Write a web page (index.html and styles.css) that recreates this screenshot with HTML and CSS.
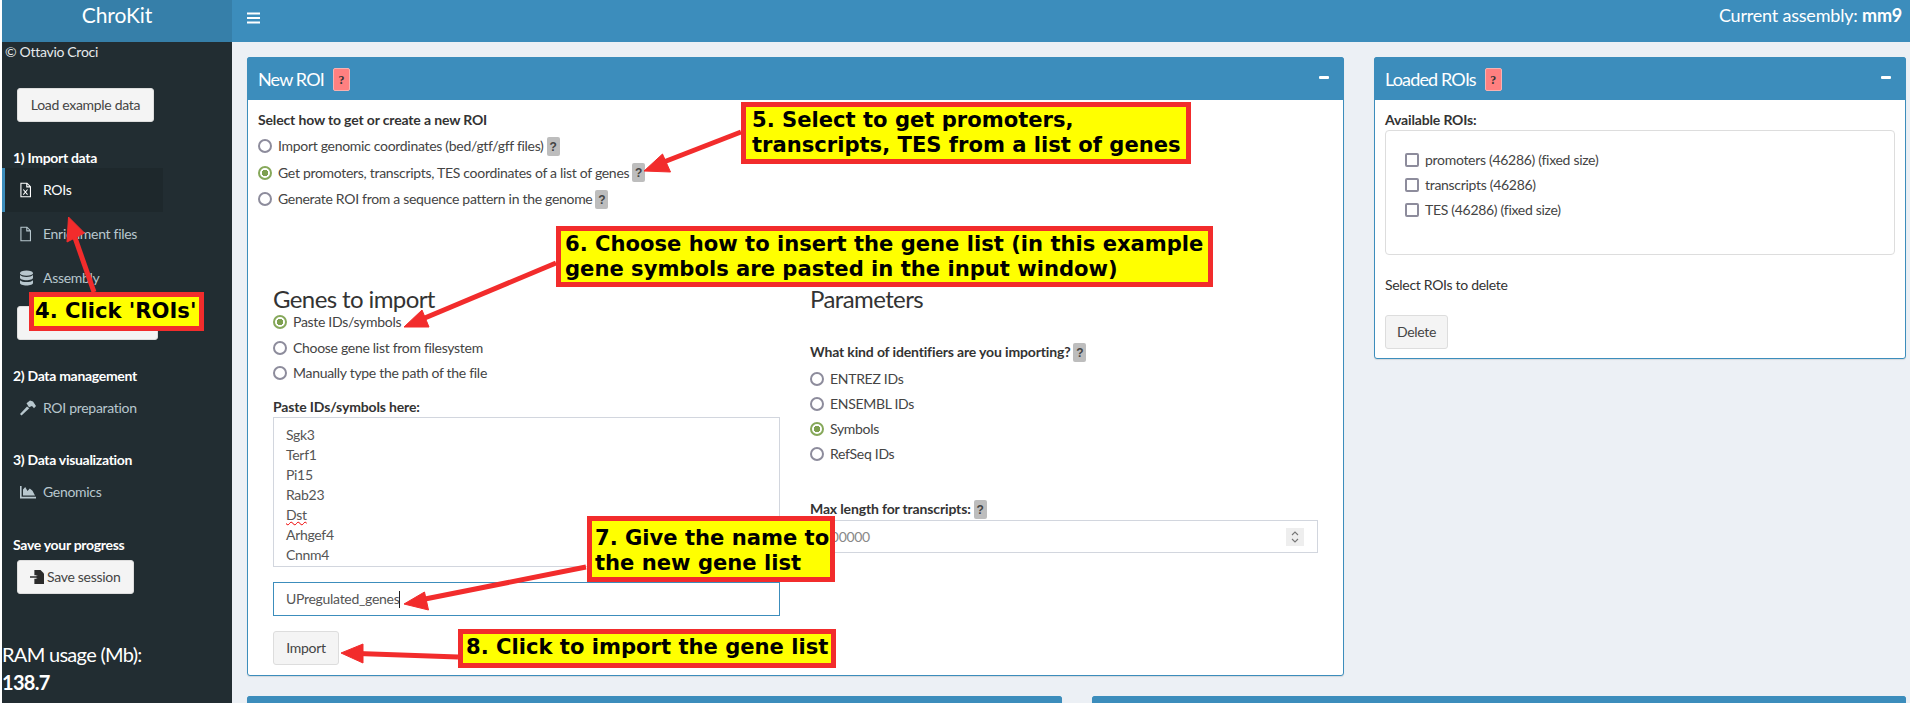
FILE: index.html
```html
<!DOCTYPE html>
<html lang="en">
<head>
<meta charset="utf-8">
<title>ChroKit</title>
<link rel="stylesheet" href="styles.css">
</head>
<body>
<div class="app">
  <aside class="sidebar">
    <div class="logo">ChroKit</div>
    <div class="copy">© Ottavio Croci</div>
    <button class="btn load">Load example data</button>
    <h4 class="side-h first">1) Import data</h4>
    <a class="item active"><svg class="ic" viewBox="0 0 12 16"><path d="M1 .6h6.600L11.400 4.400V15.400H1z M7.400 .8V4.600H11.200" fill="none" stroke="currentColor" stroke-width="1.200"/><path d="M3.600 7.500l4.600 5.500M8.200 7.500l-4.600 5.500" stroke="currentColor" stroke-width="1.100"/></svg>ROIs</a>
    <a class="item"><svg class="ic" viewBox="0 0 12 16"><path d="M1 .6h6.600L11.400 4.400V15.400H1z M7.400 .8V4.600H11.200" fill="none" stroke="currentColor" stroke-width="1.200"/></svg>Enrichment files</a>
    <a class="item"><svg class="ic db" viewBox="0 0 14 16"><ellipse cx="7" cy="2.800" rx="7" ry="2.800" fill="currentColor"/><path d="M0 4.800v3c0 1.500 3.100 2.700 7 2.700s7-1.200 7-2.700v-3c-1.200 1.300-3.900 2-7 2s-5.800-.7-7-2zM0 10.300v3c0 1.500 3.100 2.700 7 2.700s7-1.200 7-2.700v-3c-1.200 1.300-3.900 2-7 2s-5.800-.7-7-2z" fill="currentColor"/></svg>Assembly</a>
    <button class="btn hidden-btn">Load assembly</button>
    <h4 class="side-h second">2) Data management</h4>
    <a class="item"><svg class="ic wide" viewBox="0 0 16 16"><path d="M1.500 15.500L0 14l7-7.500 2.300 1.700z" fill="currentColor"/><path d="M6.500 3.200L10 .5l3 1L16 6l-2 2.200-2-2.200-3 1.200z" fill="currentColor"/></svg>ROI preparation</a>
    <h4 class="side-h third">3) Data visualization</h4>
    <a class="item"><svg class="ic wide" viewBox="0 0 16 14"><path d="M0 1h1.600v10.800H16V13.400H0z" fill="currentColor"/><path d="M3 10.600V4.500L5.200 2 7.500 6 9.800 3.500 12.500 5.800 15 10.600z" fill="currentColor"/></svg>Genomics</a>
    <h4 class="side-h fourth">Save your progress</h4>
    <button class="btn save"><svg class="ic-save" viewBox="0 0 16 16"><path d="M5 0h7l4 4v12H5z" fill="#2b2b2b"/><path d="M0 8h9" stroke="#f4f4f4" stroke-width="4"/><path d="M0 7.200h7.500V5l3.800 3-3.800 3V8.800H0z" fill="#2b2b2b"/></svg>Save session</button>
    <div class="ram">RAM usage (Mb):</div>
    <div class="ram strong">138.7</div>
  </aside>

  <div class="right">
    <header class="topbar">
      <svg class="burger" viewBox="0 0 14 12"><path d="M0 0h14v2.200H0zM0 4.900h14v2.200H0zM0 9.800h14V12H0z" fill="#fff"/></svg>
      <div class="assembly">Current assembly: <b>mm9</b></div>
    </header>

    <main class="content">
      <section class="box box-new">
        <div class="box-head"><span class="box-title">New ROI</span><span class="q q-red">?</span><span class="minus"></span></div>
        <div class="box-body">
          <div class="lab">Select how to get or create a new ROI</div>
          <div class="radios top-radios">
            <label class="opt"><input type="radio" name="how">Import genomic coordinates (bed/gtf/gff files)<span class="q q-gray">?</span></label>
            <label class="opt"><input type="radio" name="how" checked>Get promoters, transcripts, TES coordinates of a list of genes<span class="q q-gray">?</span></label>
            <label class="opt"><input type="radio" name="how">Generate ROI from a sequence pattern in the genome<span class="q q-gray">?</span></label>
          </div>
          <div class="cols">
            <div class="col">
              <h3>Genes to import</h3>
              <div class="radios left-radios">
                <label class="opt"><input type="radio" name="src" checked>Paste IDs/symbols</label>
                <label class="opt"><input type="radio" name="src">Choose gene list from filesystem</label>
                <label class="opt"><input type="radio" name="src">Manually type the path of the file</label>
              </div>
              <div class="lab paste-lab">Paste IDs/symbols here:</div>
              <div class="area">
                <div>Sgk3</div><div>Terf1</div><div>Pi15</div><div>Rab23</div><div><span class="typo">Dst</span></div><div>Arhgef4</div><div>Cnnm4</div>
              </div>
              <div class="field focus">UPregulated_genes<span class="caret"></span></div>
              <button class="btn import">Import</button>
            </div>
            <div class="col">
              <h3>Parameters</h3>
              <div class="lab kind-lab">What kind of identifiers are you importing?<span class="q q-gray">?</span></div>
              <div class="radios right-radios">
                <label class="opt"><input type="radio" name="id">ENTREZ IDs</label>
                <label class="opt"><input type="radio" name="id">ENSEMBL IDs</label>
                <label class="opt"><input type="radio" name="id" checked>Symbols</label>
                <label class="opt"><input type="radio" name="id">RefSeq IDs</label>
              </div>
              <div class="lab max-lab">Max length for transcripts:<span class="q q-gray">?</span></div>
              <div class="field number"><span class="num">100000</span>
                <span class="spin"><svg viewBox="0 0 10 18"><path d="M2 7l3-3 3 3M2 11l3 3 3-3" fill="none" stroke="#777" stroke-width="1.100"/></svg></span>
              </div>
            </div>
          </div>
        </div>
      </section>

      <section class="box box-loaded">
        <div class="box-head"><span class="box-title">Loaded ROIs</span><span class="q q-red">?</span><span class="minus"></span></div>
        <div class="box-body">
          <div class="lab">Available ROIs:</div>
          <div class="well">
            <label class="opt"><input type="checkbox">promoters (46286) (fixed size)</label>
            <label class="opt"><input type="checkbox">transcripts (46286)</label>
            <label class="opt"><input type="checkbox">TES (46286) (fixed size)</label>
          </div>
          <div class="note">Select ROIs to delete</div>
          <button class="btn delete">Delete</button>
        </div>
      </section>

      <section class="box box-low"><div class="box-head"></div></section>
      <section class="box box-low"><div class="box-head"></div></section>
    </main>
  </div>
</div>

<svg class="arrows" viewBox="0 0 1910 703">
  <g fill="#f22c2c" stroke="#f22c2c">
    <path class="shaft" d="M94 292L73 232"/><path d="M68.500 217L67 242 84.500 233z"/>
    <path class="shaft" d="M741 132L656 165"/><path d="M644 171L662.500 154 670.500 172z"/>
    <path class="shaft" d="M556 263L420 320"/><path d="M404 327L422 310 429 327z"/>
    <path class="shaft" d="M586 567L420 600"/><path d="M404 604L424.500 592 428.500 610z"/>
    <path class="shaft" d="M458 657L358 653.500"/><path d="M341 653L363 644 363 663z"/>
  </g>
</svg>
<div class="note-box n4">4. Click 'ROIs'</div>
<div class="note-box n5">5. Select to get promoters,<br>transcripts, TES from a list of genes</div>
<div class="note-box n6">6. Choose how to insert the gene list (in this example<br>gene symbols are pasted in the input window)</div>
<div class="note-box n7">7. Give the name to<br>the new gene list</div>
<div class="note-box n8">8. Click to import the gene list</div>
</body>
</html>
```
FILE: styles.css
```css
* { box-sizing: border-box; }
html, body { margin: 0; height: 703px; overflow: hidden; background: #fff; }
body { font-family: "Lato", "Open Sans", sans-serif; font-size: 14px; line-height: 20px; color: #333; letter-spacing: -0.3px; position: relative; }
.app { display: flex; height: 703px; padding-left: 2px; }
.sidebar { width: 230px; flex: none; background: #222d32; color: #fff; height: 703px; overflow: hidden; }
.logo { height: 42px; background: #367fa9; text-align: center; font-size: 21px; line-height: 30px; letter-spacing: -.1px; color: #fff; }
.copy { color: #e6eaec; padding-left: 3px; }
.btn { display: block; font: inherit; letter-spacing: inherit; height: 34px; padding: 0 12px; background: #f4f4f4; border: 1px solid #ddd; border-radius: 3px; color: #444; }
.load { margin: 26px 0 0 15px; width: 137px; }
.side-h { margin: 0 0 0 11px; font-size: 14px; font-weight: 700; line-height: 20px; color: #fff; height: 20px; }
.first { margin-top: 26px; }
.second { margin-top: 26px; }
.third { margin-top: 20px; }
.fourth { margin-top: 21px; }
.item { display: flex; align-items: center; height: 44px; padding-left: 15px; color: #b8c7ce; border-left: 3px solid transparent; width: 161px; white-space: nowrap; }
.item.active { background: #1e282c; border-left-color: #3c8dbc; color: #fff; }
.ic { width: 11px; height: 16px; margin-right: 12px; flex: none; }
.ic.db { width: 13px; margin-right: 10px; }
.ic.wide { width: 16px; margin-right: 7px; }
.hidden-btn { margin: 6px 0 0 15px; width: 141px; }
.save { margin: 5px 0 0 15px; width: 117px; padding: 0 0 0 12px; display: flex; align-items: center; }
.ic-save { width: 14px; height: 14px; margin-right: 3px; }
.ram { font-size: 20px; line-height: 28px; color: #fff; letter-spacing: -.7px; margin-top: -1px; }
.save + .ram { margin-top: 46px; }
.ram.strong { font-weight: 700; margin-top: 0; }

.right { flex: 1; min-width: 0; display: flex; flex-direction: column; background: #ecf0f5; }
.topbar { height: 42px; flex: none; background: #3c8dbc; color: #fff; display: flex; align-items: center; justify-content: space-between; padding: 0 8px 0 15px; }
.burger { width: 13px; height: 12px; margin-top: -6px; }
.assembly { font-size: 18px; margin-top: -13px; letter-spacing: -.2px; }

.content { display: grid; grid-template-columns: 815px 282px 30px 532px; grid-template-rows: 619px 1fr; row-gap: 20px; padding: 15px 4px 0 15px; overflow: hidden; }
.box { background: #fff; border: 1px solid #3c8dbc; border-radius: 3px; box-shadow: 0 1px 1px rgba(0,0,0,.1); }
.box-new { grid-column: 1 / 3; grid-row: 1; }
.box-loaded { grid-column: 4; grid-row: 1; align-self: start; height: 302px; }
.box-low:nth-of-type(3) { grid-column: 1; grid-row: 2; }
.box-low:nth-of-type(4) { grid-column: 2 / 5; grid-row: 2; margin-left: 30px; }
.box-head { height: 43px; margin: -1px -1px 0; background: #3c8dbc; border-radius: 3px 3px 0 0; color: #fff; display: flex; align-items: center; padding: 0 12px 0 11px; }
.box-title { font-size: 18px; margin-right: 9px; letter-spacing: -.85px; }
.minus { width: 10px; height: 3px; background: #fff; border-radius: 1px; margin-left: auto; margin-top: -3px; margin-right: 3px; }
.q { display: inline-block; font-size: 12px; font-weight: 700; text-align: center; border-radius: 2px; font-family: "Liberation Serif", serif; letter-spacing: 0; }
.q-red { width: 17px; height: 23px; line-height: 22px; background: #ff8080; border: 1px solid #f7b2b2; color: #333; margin-top: 1px; }
.q-gray { width: 13px; height: 19px; background: #bdbdbd; color: #444; margin-left: 3px; line-height: 21px; font-family: "Liberation Sans", sans-serif; }
.box-body { padding: 10px; }
.lab { font-weight: 700; white-space: nowrap; display: flex; align-items: center; height: 20px; letter-spacing: -.15px; }
.radios { display: flex; flex-direction: column; }
.opt { display: flex; align-items: center; height: 20px; white-space: nowrap; color: #444; }
input[type=radio], input[type=checkbox] { appearance: none; flex: none; width: 14px; height: 14px; margin: 0 6px 0 0; border: 2px solid #8d8c9c; background: #fff; }
input[type=radio] { border-radius: 50%; }
input[type=checkbox] { border-radius: 2px; }
input[type=radio]:checked { border-color: #86a85a; background: radial-gradient(circle, #7d9f4f 0 3px, #fff 3.500px); }
.top-radios { margin-top: 6px; gap: 6.500px; }
.cols { display: grid; grid-template-columns: 507px 508px; column-gap: 30px; margin: 77px 0 0 15px; }
.col { min-width: 0; }
h3 { margin: 0; font-size: 24px; font-weight: 400; line-height: 26px; color: #333; letter-spacing: -.6px; }
.left-radios { gap: 5.500px; }
.paste-lab { margin-top: 14px; }
.area { height: 150px; border: 1px solid #d2d6de; padding: 7px 12px 0; line-height: 20px; color: #555; overflow: hidden; }
.typo { text-decoration: underline wavy #e00; text-decoration-thickness: 1px; }
.field { height: 34px; border: 1px solid #d2d6de; padding: 0 12px; display: flex; align-items: center; color: #555; }
.focus { margin-top: 15px; border-color: #3c8dbc; }
.caret { width: 1px; height: 17px; background: #222; }
.import { margin-top: 15px; width: 66px; padding: 0; }
.kind-lab { margin-top: 30px; }
.right-radios { margin-top: 7px; gap: 5px; }
.max-lab { margin-top: 35px; }
.number { margin-top: 1px; height: 33px; justify-content: space-between; padding-right: 13px; }
.num { color: #888; }
.spin { display: flex; justify-content: center; width: 18px; height: 18px; background: #eee; }
.spin svg { width: 10px; height: 18px; }
.well { height: 125px; border: 1px solid #ddd; border-radius: 4px; padding: 19px 0 0 19px; display: flex; flex-direction: column; gap: 5px; }
.note { margin-top: 20px; }
.delete { margin-top: 20px; width: 63px; padding: 0; }

.arrows { position: absolute; left: 0; top: 0; width: 1910px; height: 703px; pointer-events: none; }
.shaft { stroke-width: 5; fill: none; }
.note-box { position: absolute; background: #ffff00; border: 5px solid #f22c2c; color: #000; font-family: "DejaVu Sans", sans-serif; font-weight: 700; font-size: 21.1px; line-height: 25px; letter-spacing: 0; padding: 0 0 0 6px; white-space: nowrap; }
.n4 { left: 29px; top: 292px; width: 175px; height: 39px; padding: 1px 0 0 1px; }
.n5 { left: 741px; top: 102px; width: 450px; height: 62px; }
.n6 { left: 556px; top: 226px; width: 657px; height: 61px; padding-left: 4px; }
.n7 { left: 587px; top: 516px; width: 248px; height: 66px; padding: 4px 0 0 3px; }
.n8 { left: 458px; top: 629px; width: 378px; height: 39px; padding-left: 3px; }
```
